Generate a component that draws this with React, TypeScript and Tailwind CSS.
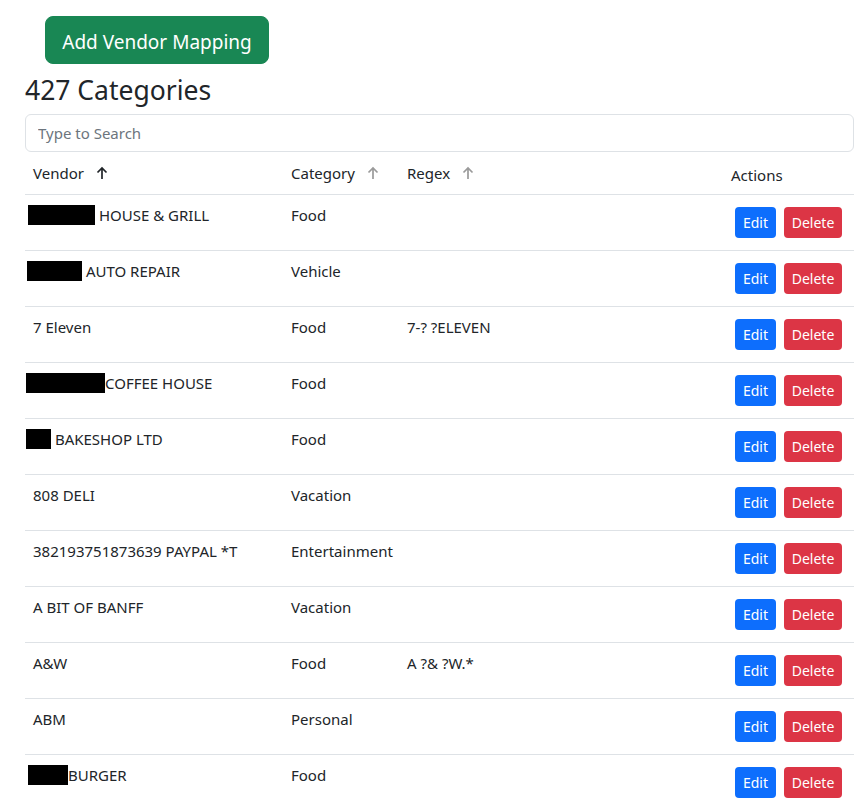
import React from 'react'

type Row = {
  redact?: { w: number; ml: number }
  vendor: string
  category: string
  regex: string
}

const rows: Row[] = [
  { redact: { w: 67, ml: -5 }, vendor: ' HOUSE & GRILL', category: 'Food', regex: '' },
  { redact: { w: 55, ml: -6 }, vendor: ' AUTO REPAIR', category: 'Vehicle', regex: '' },
  { vendor: '7 Eleven', category: 'Food', regex: '7-? ?ELEVEN' },
  { redact: { w: 79, ml: -7 }, vendor: 'COFFEE HOUSE', category: 'Food', regex: '' },
  { redact: { w: 25, ml: -7 }, vendor: ' BAKESHOP LTD', category: 'Food', regex: '' },
  { vendor: '808 DELI', category: 'Vacation', regex: '' },
  { vendor: '382193751873639 PAYPAL *T', category: 'Entertainment', regex: '' },
  { vendor: 'A BIT OF BANFF', category: 'Vacation', regex: '' },
  { vendor: 'A&W', category: 'Food', regex: 'A ?& ?W.*' },
  { vendor: 'ABM', category: 'Personal', regex: '' },
  { redact: { w: 40, ml: -5 }, vendor: 'BURGER', category: 'Food', regex: '' },
]

const SortArrow = ({ dark }: { dark?: boolean }) => (
  <svg width="12" height="14" viewBox="0 0 12 14" className={dark ? 'text-[#212529]' : 'text-[#9a9a9a]'}>
    <path d="M6 13V2M1.5 6.5L6 2l4.5 4.5" fill="none" stroke="currentColor" strokeWidth="1.7" />
  </svg>
)

const App = () => {
  return (
    <div className="bg-white text-[#212529] font-['Noto_Sans','Open_Sans',sans-serif] min-h-screen">
      <div className="pl-[25px] pr-[9px]">
        <div className="pt-4 pl-5">
          <button
            type="button"
            className="w-[224px] h-[48px] bg-[#198754] text-white text-[19px] leading-[30px] pt-[3px] border border-[#198754] rounded-lg"
          >
            Add Vendor Mapping
          </button>
        </div>
        <h2 className="text-[26.5px] leading-[34px] mt-[9px] mb-[7px] font-normal">427 Categories</h2>
        <input
          type="text"
          placeholder="Type to Search"
          className="w-full h-[38px] border border-[#dee2e6] rounded-md px-3 text-[15px] placeholder:text-[#6c757d] outline-none"
        />

        <div className="text-[15px]">
          <div className="flex h-[43px] border-b border-[#dee2e6]">
            <div className="w-[258px] px-2 flex items-center gap-3">
              <span>Vendor</span>
              <SortArrow dark />
            </div>
            <div className="w-[116px] px-2 flex items-center gap-3">
              <span>Category</span>
              <SortArrow />
            </div>
            <div className="flex-1 px-2 flex items-center gap-3">
              <span>Regex</span>
              <SortArrow />
            </div>
            <div className="w-[131px] px-2 flex items-center pt-1">Actions</div>
          </div>

          {rows.map((r, i) => (
            <div key={i} className="flex h-[56px] border-b border-[#dee2e6]">
              <div className="w-[258px] px-2 py-2 leading-6 flex items-start">
                {r.redact && (
                  <span
                    className="inline-block h-[20px] bg-black mt-[2px] shrink-0"
                    style={{ width: r.redact.w, marginLeft: r.redact.ml }}
                  />
                )}
                <span className="whitespace-pre">{r.vendor}</span>
              </div>
              <div className="w-[116px] px-2 py-2 leading-6 whitespace-nowrap">{r.category}</div>
              <div className="flex-1 px-2 py-2 leading-6">{r.regex}</div>
              <div className="w-[131px] px-2 py-2 flex items-start">
                <button
                  type="button"
                  className="m-1 h-[31px] w-[41px] bg-[#0d6efd] text-white text-[14px] rounded"
                >
                  Edit
                </button>
                <button
                  type="button"
                  className="m-1 h-[31px] w-[58px] bg-[#dc3545] text-white text-[14px] rounded"
                >
                  Delete
                </button>
              </div>
            </div>
          ))}
        </div>
      </div>
    </div>
  )
}

export default App
